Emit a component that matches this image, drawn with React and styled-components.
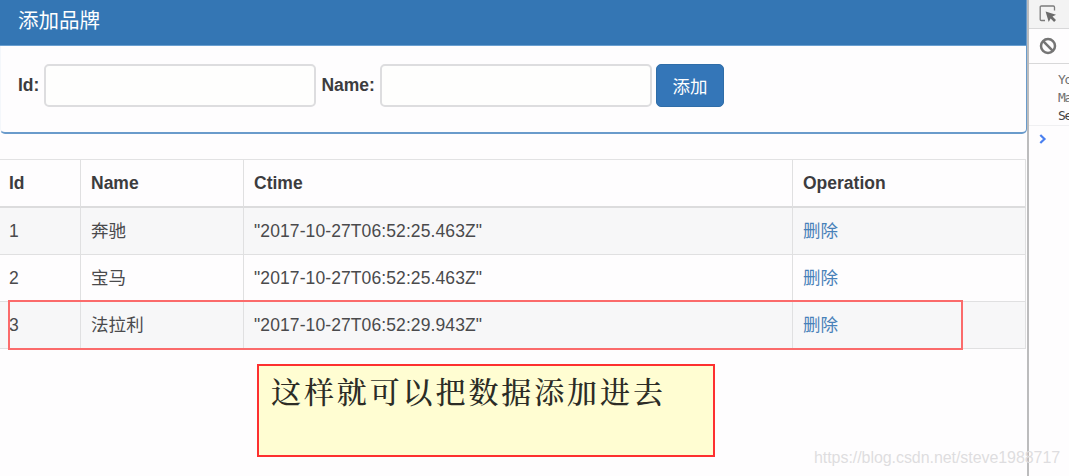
import styled, { createGlobalStyle } from 'styled-components';

const brands = [
  { id: 1, name: '奔驰', ctime: '"2017-10-27T06:52:25.463Z"' },
  { id: 2, name: '宝马', ctime: '"2017-10-27T06:52:25.463Z"' },
  { id: 3, name: '法拉利', ctime: '"2017-10-27T06:52:29.943Z"' },
];

function InspectIcon() {
  return (
    <svg width="18" height="18" viewBox="0 0 18 18" fill="none">
      <path
        d="M6 15.5H2.4Q1.2 15.5 1.2 14.3V2.2Q1.2 1 2.4 1H14.3Q15.5 1 15.5 2.2V5.5"
        stroke="#7c7c7c"
        strokeWidth="1.3"
      />
      <path d="M6.6 6.4L17 9.8L13.5 11.6L17 15L15.1 17L11.6 13.6L9.7 17Z" fill="#6b6b6b" />
    </svg>
  );
}

function ClearIcon() {
  return (
    <svg width="18" height="18" viewBox="0 0 18 18" fill="none" stroke="#757575" strokeWidth="2.5">
      <circle cx="9" cy="9" r="7" />
      <path d="M4.2 4.2L13.8 13.8" />
    </svg>
  );
}

function PromptIcon() {
  return (
    <svg width="8" height="10" viewBox="0 0 8 10" fill="none" stroke="#4a80f0" strokeWidth="2.2">
      <path d="M1.3 1L5.5 5L1.3 9" />
    </svg>
  );
}

function App() {
  return (
    <ScScreen>
      <GlobalStyle />

      <ScPage>
        <ScPanel>
          <ScPanelHeading>添加品牌</ScPanelHeading>

          <ScPanelBody>
            <ScLabel>
              Id:
              <ScInput type="text" />
            </ScLabel>

            <ScLabel>
              Name:
              <ScInput type="text" />
            </ScLabel>

            <ScButton type="button">添加</ScButton>
          </ScPanelBody>
        </ScPanel>

        <ScTable>
          <colgroup>
            <ScCol $width="81px" />
            <ScCol $width="163px" />
            <ScCol $width="549px" />
            <ScCol />
          </colgroup>
          <thead>
            <tr>
              <ScTh>Id</ScTh>
              <ScTh>Name</ScTh>
              <ScTh>Ctime</ScTh>
              <ScTh>Operation</ScTh>
            </tr>
          </thead>
          <tbody>
            {brands.map((brand) => (
              <ScRow key={brand.id}>
                <ScTd>{brand.id}</ScTd>
                <ScTd>{brand.name}</ScTd>
                <ScTd>{brand.ctime}</ScTd>
                <ScTd>
                  <ScLink href="#">删除</ScLink>
                </ScTd>
              </ScRow>
            ))}
          </tbody>
        </ScTable>
      </ScPage>

      <ScDevTools>
        <ScToolbar $height="29px" $background="#f3f3f3">
          <InspectIcon />
        </ScToolbar>

        <ScToolbar $height="35px">
          <ClearIcon />
        </ScToolbar>

        <ScMessage>
          <ScMessageLine>Yo</ScMessageLine>
          <ScMessageLine>Ma</ScMessageLine>
          <ScMessageLine $dark>Se</ScMessageLine>
        </ScMessage>

        <ScPrompt>
          <PromptIcon />
        </ScPrompt>
      </ScDevTools>

      <ScHighlight />
      <ScNote>这样就可以把数据添加进去</ScNote>
      <ScWatermark>https://blog.csdn.net/steve1988717</ScWatermark>
    </ScScreen>
  );
}

const GlobalStyle = createGlobalStyle`
  * {
    box-sizing: border-box;
  }

  body {
    margin: 0;
    background: #fefdfe;
    color: #4a4a4c;
    font-family: "Liberation Sans", "Noto Sans CJK SC", sans-serif;
    font-size: 17.5px;
  }
`;

const ScScreen = styled.div`
  position: relative;
  display: flex;
  height: 476px;
  overflow: hidden;
`;

const ScPage = styled.main`
  width: 1027px;
  flex: none;
`;

const ScPanel = styled.section`
  height: 134px;
  margin-bottom: 25px;
  border: 1px solid #6a9bcb;
  border-top: 0;
  border-left-color: #f4f7fb;
  border-bottom-width: 2px;
  border-radius: 0 0 5px 5px;
`;

const ScPanelHeading = styled.h3`
  height: 46px;
  margin: 0 0 0 -1px;
  padding-left: 18px;
  border-bottom: 1px solid #6a9fd0;
  background: #3476b4;
  color: #fff;
  font-size: 20.5px;
  font-weight: 400;
  line-height: 42px;
`;

const ScPanelBody = styled.div`
  display: flex;
  align-items: center;
  gap: 5px;
  padding: 18px 17px;
`;

const ScLabel = styled.label`
  display: flex;
  align-items: center;
  gap: 5px;
  color: #3c3c3e;
  font-weight: 700;
  line-height: 43px;
`;

const ScInput = styled.input`
  width: 272px;
  height: 43px;
  padding: 7px 15px;
  border: 2px solid #dddddf;
  border-radius: 5px;
  background: #fefefd;
  font: inherit;
`;

const ScButton = styled.button`
  width: 68px;
  height: 43px;
  margin-left: -1px;
  padding: 0;
  border: 1px solid #2f6da8;
  border-radius: 5px;
  background: #3476b8;
  color: #fff;
  font: inherit;
`;

const ScTable = styled.table`
  width: 1026px;
  table-layout: fixed;
  border-collapse: separate;
  border-spacing: 0;
  border-top: 1px solid #e2e2e3;
`;

const ScCol = styled.col`
  width: ${({ $width }) => $width || 'auto'};
`;

const ScTh = styled.th`
  height: 48px;
  padding: 0 10px;
  border-right: 1px solid #e0e0e1;
  border-bottom: 2px solid #dcdcdd;
  color: #3c3c3e;
  text-align: left;
  line-height: 24px;

  &:first-child {
    padding-left: 9px;
  }
`;

const ScTd = styled.td`
  height: 47px;
  padding: 0 10px;
  border-right: 1px solid #e0e0e1;
  border-bottom: 1px solid #e0e0e1;
  line-height: 24px;
  letter-spacing: 0.1px;

  &:first-child {
    padding-left: 9px;
  }
`;

const ScRow = styled.tr`
  &:nth-child(odd) {
    background: #f7f7f8;
  }
`;

const ScLink = styled.a`
  color: #4881b9;
  text-decoration: none;
`;

const ScDevTools = styled.aside`
  flex: 1;
  min-width: 0;
  overflow: hidden;
  border-left: 2px solid #bcbcbd;
`;

const ScToolbar = styled.div`
  height: ${({ $height }) => $height};
  display: flex;
  align-items: center;
  padding-left: 10px;
  border-bottom: 1px solid #d8d8d9;
  background: ${({ $background }) => $background || 'transparent'};
`;

const ScMessage = styled.div`
  height: 62px;
  padding: 7px 0 0 29px;
  border-bottom: 1px solid #f0f0f2;
`;

const ScMessageLine = styled.div`
  color: ${({ $dark }) => ($dark ? '#444' : '#707070')};
  font-family: "DejaVu Sans Mono", monospace;
  font-size: 13px;
  line-height: 18px;
  letter-spacing: -1.3px;
  white-space: nowrap;
`;

const ScPrompt = styled.div`
  display: flex;
  padding: 8px 0 0 10px;
`;

const ScHighlight = styled.div`
  position: absolute;
  left: 8px;
  top: 300px;
  width: 955px;
  height: 50px;
  border: 2px solid #fb6b6b;
`;

const ScNote = styled.div`
  position: absolute;
  left: 257px;
  top: 364px;
  width: 458px;
  height: 93px;
  padding-left: 12px;
  border: 2px solid #fd3030;
  background: #fffdd2;
  color: #2c2c26;
  font-family: "Noto Serif CJK SC", "Noto Sans CJK SC", serif;
  font-size: 30px;
  font-weight: 500;
  line-height: 49px;
  letter-spacing: 2.9px;
  white-space: nowrap;
`;

const ScWatermark = styled.div`
  position: absolute;
  left: 814px;
  top: 448px;
  color: #dedde0;
  font-size: 16px;
  line-height: 20px;
  letter-spacing: -0.06px;
  white-space: nowrap;
`;

export default App;
